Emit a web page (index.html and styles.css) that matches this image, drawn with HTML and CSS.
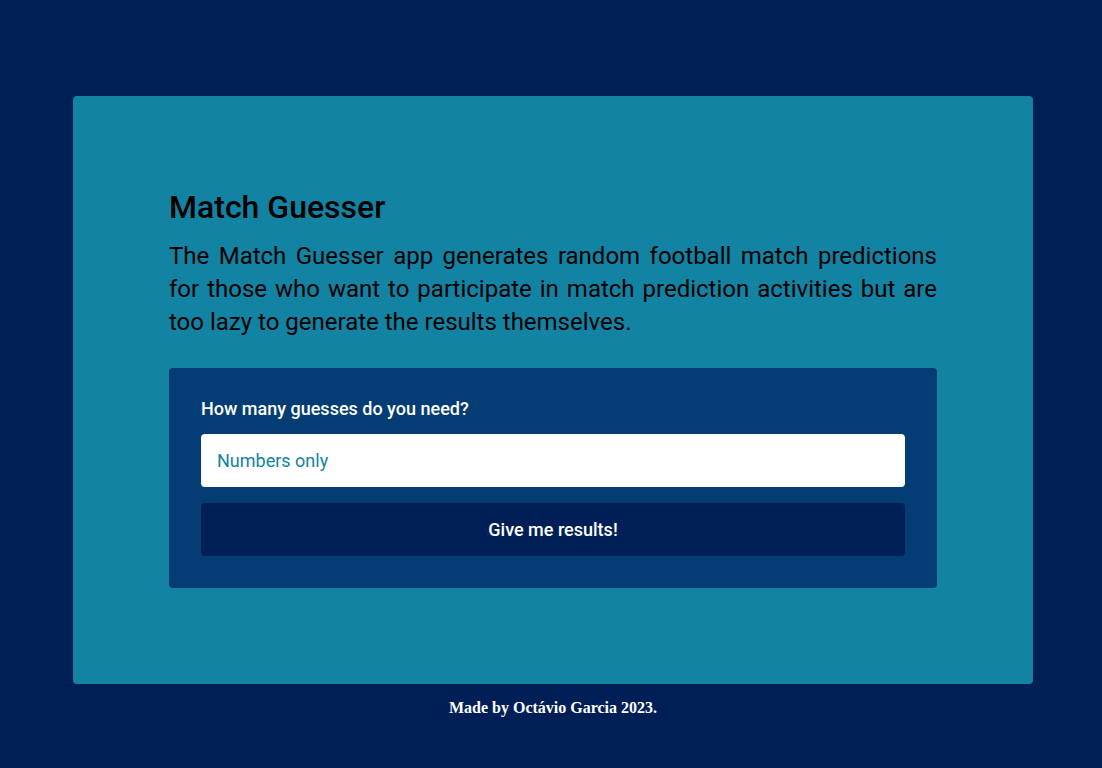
FILE: index.html
```html
<!DOCTYPE html>
<html lang="en">
<head>
<meta charset="utf-8">
<title>Match Guesser</title>
<link rel="stylesheet" href="styles.css">
</head>
<body>
<main class="card">
  <h1 class="title">Match Guesser</h1>
  <p class="intro">The Match Guesser app generates random football match predictions for those who want to participate in match prediction activities but are too lazy to generate the results themselves.</p>
  <form class="form">
    <label class="label" for="count">How many guesses do you need?</label>
    <input class="input" id="count" type="text" placeholder="Numbers only">
    <button class="button" type="button">Give me results!</button>
  </form>
</main>
<footer class="footer">Made by Octávio Garcia 2023.</footer>
</body>
</html>
```
FILE: styles.css
```css
* { box-sizing: border-box; }
html, body { margin: 0; }
body {
  background: #001f57;
  min-height: 768px;
  padding-top: 96px;
  font-family: Roboto, "Liberation Sans", sans-serif;
}
.card {
  width: 960px;
  margin: 0 auto 0 73px;
  height: 588px;
  background: #1283a3;
  border-radius: 4px;
  padding: 93px 96px 96px;
  display: flex;
  flex-direction: column;
}
.title {
  margin: 0;
  font-size: 32px;
  font-weight: 500;
  line-height: 37px;
  color: #000;
}
.intro {
  margin: 14px 0 29px;
  font-size: 24px;
  line-height: 33px;
  text-align: justify;
  color: #000;
}
.form {
  background: #033d73;
  border-radius: 4px;
  padding: 32px;
  display: flex;
  flex-direction: column;
}
.label {
  color: #fff;
  font-size: 18px;
  font-weight: 500;
  line-height: 18px;
  margin-bottom: 16px;
}
.input {
  height: 53px;
  border: none;
  border-radius: 4px;
  background: #fff;
  padding: 0 16px;
  font-family: Roboto, "Liberation Sans", sans-serif;
  font-size: 18px;
  color: #1283a3;
  outline: none;
}
.input::placeholder { color: #1283a3; opacity: 1; }
.button {
  margin-top: 16px;
  height: 53px;
  border: none;
  border-radius: 4px;
  background: #001f57;
  color: #fff;
  font-family: Roboto, "Liberation Sans", sans-serif;
  font-size: 18px;
  font-weight: 500;
}
.footer {
  text-align: center;
  font-family: "Liberation Serif", serif;
  font-weight: 700;
  font-size: 16px;
  color: #fff;
  margin-top: 15px;
  padding-left: 4px;
}
```
